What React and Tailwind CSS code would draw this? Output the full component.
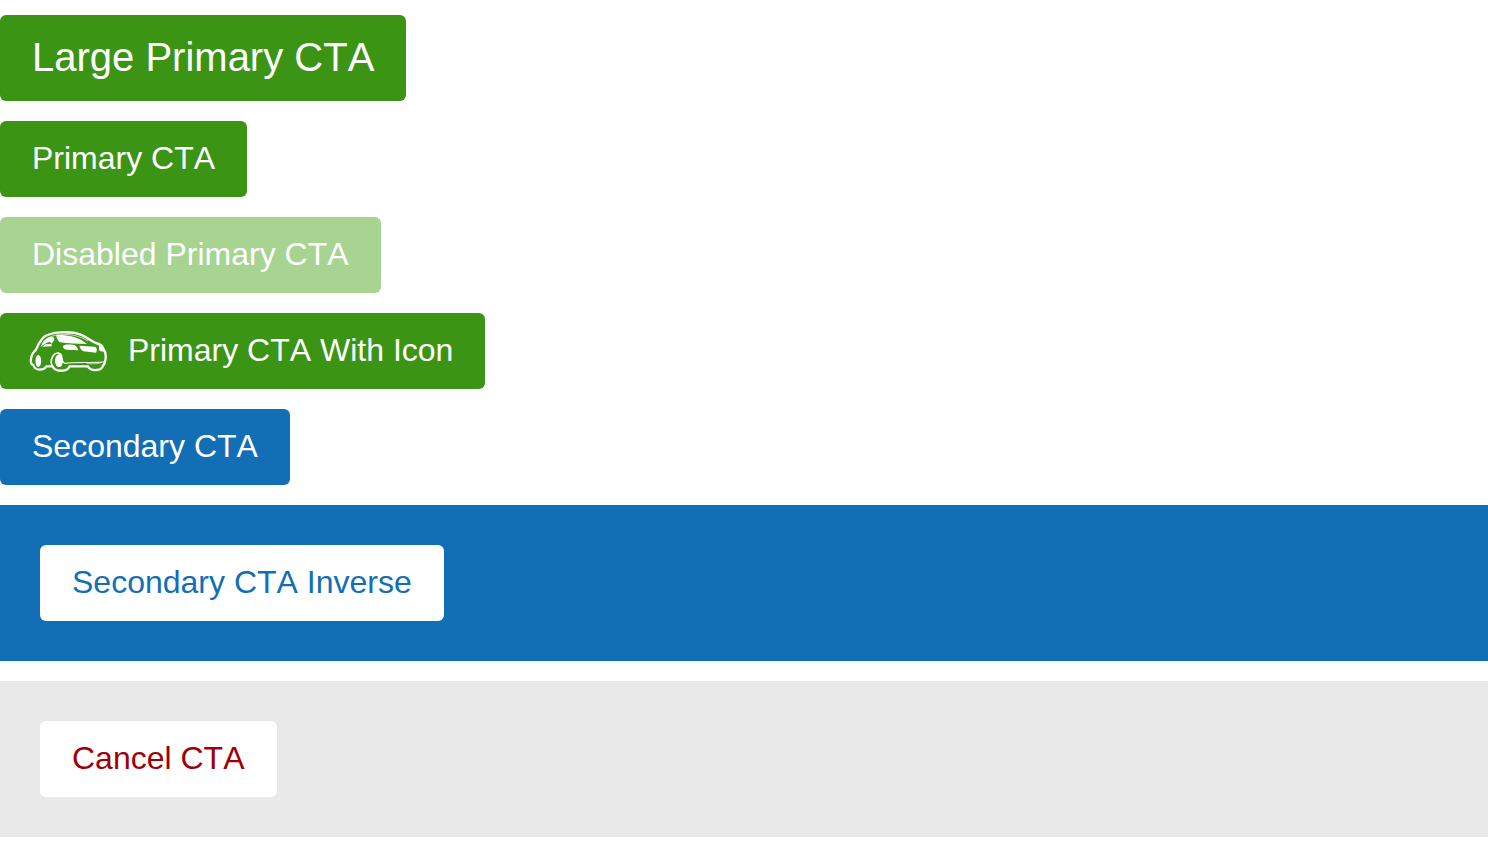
function CarIcon() {
  return (
    <svg className="h-11 w-20 shrink-0" viewBox="12 15 240 132" fill="none" aria-hidden="true">
      <g stroke="#fff" strokeWidth="7" strokeLinejoin="round" strokeLinecap="round">
        <path d="M21 116C19 102 24 88 36 77C41 65 47 53 56 43C66 31 86 26 112 25C140 24 158 27 170 32C188 39 202 52 216 57C228 60 234 64 237 72C244 82 247 95 244 108C243 118 241 122 237 125C234 134 228 138 218 138C204 139 196 137 192 127H137C132 136 128 139 115 140C102 141 91 139 86 127H67C63 135 58 137 47 137C36 137 31 132 28 123C25 122 22 120 21 116Z" />
        <path d="M85 127C78 115 82 99 91 91C98 85 109 85 113 96" strokeWidth="5" />
      </g>
      <path d="M60 56C69 43 84 34 106 32C140 29 168 36 192 51" stroke="#fff" strokeWidth="2" />
      <path d="M50 69C54 54 65 41 79 38C90 37 94 44 88 52L83 59L77 53C66 56 57 62 50 69Z" fill="#fff" />
      <path d="M55 68L64 61L82 60L84 67Z" fill="#fff" />
      <path d="M96 33C132 32 164 38 189 60C160 60 132 58 107 55C102 50 98 42 96 33Z" fill="#fff" />
      <path d="M117 67C119 61 132 61 150 63C157 65 160 71 163 79L128 77C120 76 117 72 117 67Z" fill="#fff" />
      <path d="M166 65L211 68C218 69 221 76 216 86L178 82C172 79 169 73 166 65Z" fill="#fff" />
      <path d="M223 61C227 67 223 76 227 81L240 83L235 65Z" fill="#fff" />
      <ellipse cx="43" cy="111" rx="8.500" ry="18" fill="#fff" />
      <ellipse cx="105" cy="110" rx="12" ry="19" fill="#fff" />
      <path d="M111 94C115 104 114 117 124 118C153 114 194 117 239 114" stroke="#fff" strokeWidth="3.500" strokeLinecap="round" />
      <path d="M188 118C207 121 225 119 234 115" stroke="#fff" strokeWidth="2" />
    </svg>
  );
}

const base =
  "inline-flex items-center rounded-md px-8 cursor-pointer whitespace-nowrap";
const regular = "h-[76px] pb-0.5 text-[32px] leading-10";

export default function App() {
  return (
    <main className="flex flex-col items-start gap-5 bg-white py-[15px] font-['Liberation_Sans',Arial,sans-serif] [font-kerning:none]">
      <button type="button" className={`${base} h-[86px] pb-0.5 text-[40px] leading-12 bg-[#3b9414] text-white`}>
        Large Primary CTA
      </button>
      <button type="button" className={`${base} ${regular} bg-[#3b9414] text-white`}>
        Primary CTA
      </button>
      <button type="button" disabled className={`${base} ${regular} bg-[#a7d491] text-white`}>
        Disabled Primary CTA
      </button>
      <button
        type="button"
        className="inline-flex h-[76px] cursor-pointer items-center gap-5 rounded-md bg-[#3b9414] pr-8 pl-7 text-[32px] leading-10 whitespace-nowrap text-white"
      >
        <CarIcon />
        <span className="pb-0.5">Primary CTA With Icon</span>
      </button>
      <button type="button" className={`${base} ${regular} bg-[#126fb5] text-white`}>
        Secondary CTA
      </button>
      <section className="flex w-full bg-[#126fb5] p-10">
        <button type="button" className={`${base} ${regular} bg-white text-[#126fb5]`}>
          Secondary CTA Inverse
        </button>
      </section>
      <section className="flex w-full bg-[#e9e9e9] p-10">
        <button type="button" className={`${base} ${regular} bg-white text-[#9e0006]`}>
          Cancel CTA
        </button>
      </section>
    </main>
  );
}
